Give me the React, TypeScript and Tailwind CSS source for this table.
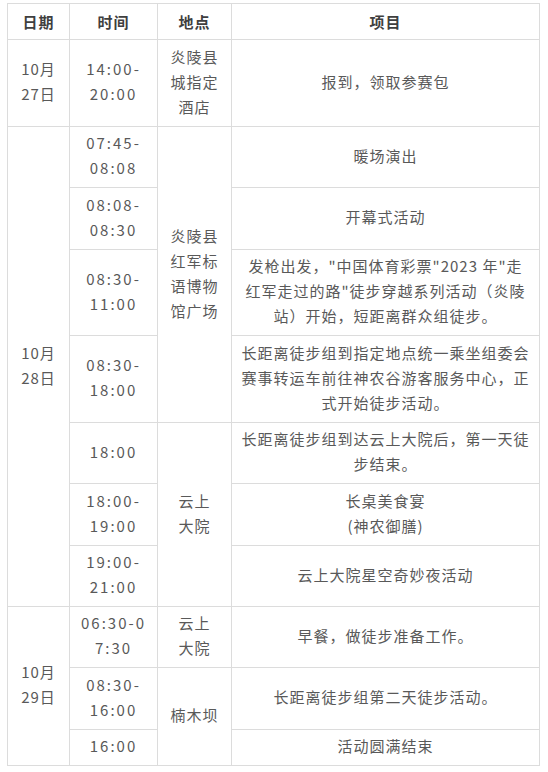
import React from "react";

const cell =
  "border border-[#dcdcdc] px-[4px] pt-[3px] pb-[7px] text-center align-middle whitespace-nowrap";
const head =
  "border border-[#dcdcdc] px-[4px] py-[5px] text-center align-middle whitespace-nowrap font-bold text-[#3f3f3f]";
const time = cell + " tracking-[2px]";

function Lines({ t }: { t: string[] }) {
  return (
    <>
      {t.map((l, i) => (
        <React.Fragment key={i}>
          {i > 0 && <br />}
          {l}
        </React.Fragment>
      ))}
    </>
  );
}

export default function App() {
  return (
    <div className="w-[548px] h-[772px] bg-white pt-[3px] pl-[7px]">
      <table
        className="table-fixed border-collapse w-[532px] text-[15px] leading-[25px] tracking-[1px] text-[#595959]"
        style={{ fontFamily: '"Noto Sans CJK SC", "Noto Sans", sans-serif' }}
      >
        <colgroup>
          <col className="w-[62px]" />
          <col className="w-[88px]" />
          <col className="w-[74px]" />
          <col className="w-[308px]" />
        </colgroup>
        <thead>
          <tr className="h-[36px]">
            <th className={head}>日期</th>
            <th className={head}>时间</th>
            <th className={head}>地点</th>
            <th className={head}>项目</th>
          </tr>
        </thead>
        <tbody>
          <tr className="h-[87px]">
            <td className={cell}>
              <Lines t={["10月", "27日"]} />
            </td>
            <td className={time}>
              <Lines t={["14:00-", "20:00"]} />
            </td>
            <td className={cell}>
              <Lines t={["炎陵县", "城指定", "酒店"]} />
            </td>
            <td className={cell}>报到，领取参赛包</td>
          </tr>

          <tr className="h-[61px]">
            <td className={cell} rowSpan={7}>
              <Lines t={["10月", "28日"]} />
            </td>
            <td className={time}>
              <Lines t={["07:45-", "08:08"]} />
            </td>
            <td className={cell} rowSpan={4}>
              <Lines t={["炎陵县", "红军标", "语博物", "馆广场"]} />
            </td>
            <td className={cell}>暖场演出</td>
          </tr>
          <tr className="h-[62px]">
            <td className={time}>
              <Lines t={["08:08-", "08:30"]} />
            </td>
            <td className={cell}>开幕式活动</td>
          </tr>
          <tr className="h-[86px]">
            <td className={time}>
              <Lines t={["08:30-", "11:00"]} />
            </td>
            <td className={cell}>
              <Lines
                t={[
                  '发枪出发，"中国体育彩票"2023 年"走',
                  '红军走过的路"徒步穿越系列活动（炎陵',
                  "站）开始，短距离群众组徒步。",
                ]}
              />
            </td>
          </tr>
          <tr className="h-[87px]">
            <td className={time}>
              <Lines t={["08:30-", "18:00"]} />
            </td>
            <td className={cell}>
              <Lines
                t={[
                  "长距离徒步组到指定地点统一乘坐组委会",
                  "赛事转运车前往神农谷游客服务中心，正",
                  "式开始徒步活动。",
                ]}
              />
            </td>
          </tr>
          <tr className="h-[61px]">
            <td className={time}>18:00</td>
            <td className={cell} rowSpan={3}>
              <Lines t={["云上", "大院"]} />
            </td>
            <td className={cell}>
              <Lines t={["长距离徒步组到达云上大院后，第一天徒", "步结束。"]} />
            </td>
          </tr>
          <tr className="h-[62px]">
            <td className={time}>
              <Lines t={["18:00-", "19:00"]} />
            </td>
            <td className={cell}>
              <Lines t={["长桌美食宴", "(神农御膳)"]} />
            </td>
          </tr>
          <tr className="h-[61px]">
            <td className={time}>
              <Lines t={["19:00-", "21:00"]} />
            </td>
            <td className={cell}>云上大院星空奇妙夜活动</td>
          </tr>

          <tr className="h-[61px]">
            <td className={cell} rowSpan={3}>
              <Lines t={["10月", "29日"]} />
            </td>
            <td className={time}>
              <Lines t={["06:30-0", "7:30"]} />
            </td>
            <td className={cell}>
              <Lines t={["云上", "大院"]} />
            </td>
            <td className={cell}>早餐，做徒步准备工作。</td>
          </tr>
          <tr className="h-[62px]">
            <td className={time}>
              <Lines t={["08:30-", "16:00"]} />
            </td>
            <td className={cell} rowSpan={2}>
              楠木坝
            </td>
            <td className={cell}>长距离徒步组第二天徒步活动。</td>
          </tr>
          <tr className="h-[36px]">
            <td className={time}>16:00</td>
            <td className={cell}>活动圆满结束</td>
          </tr>
        </tbody>
      </table>
    </div>
  );
}
